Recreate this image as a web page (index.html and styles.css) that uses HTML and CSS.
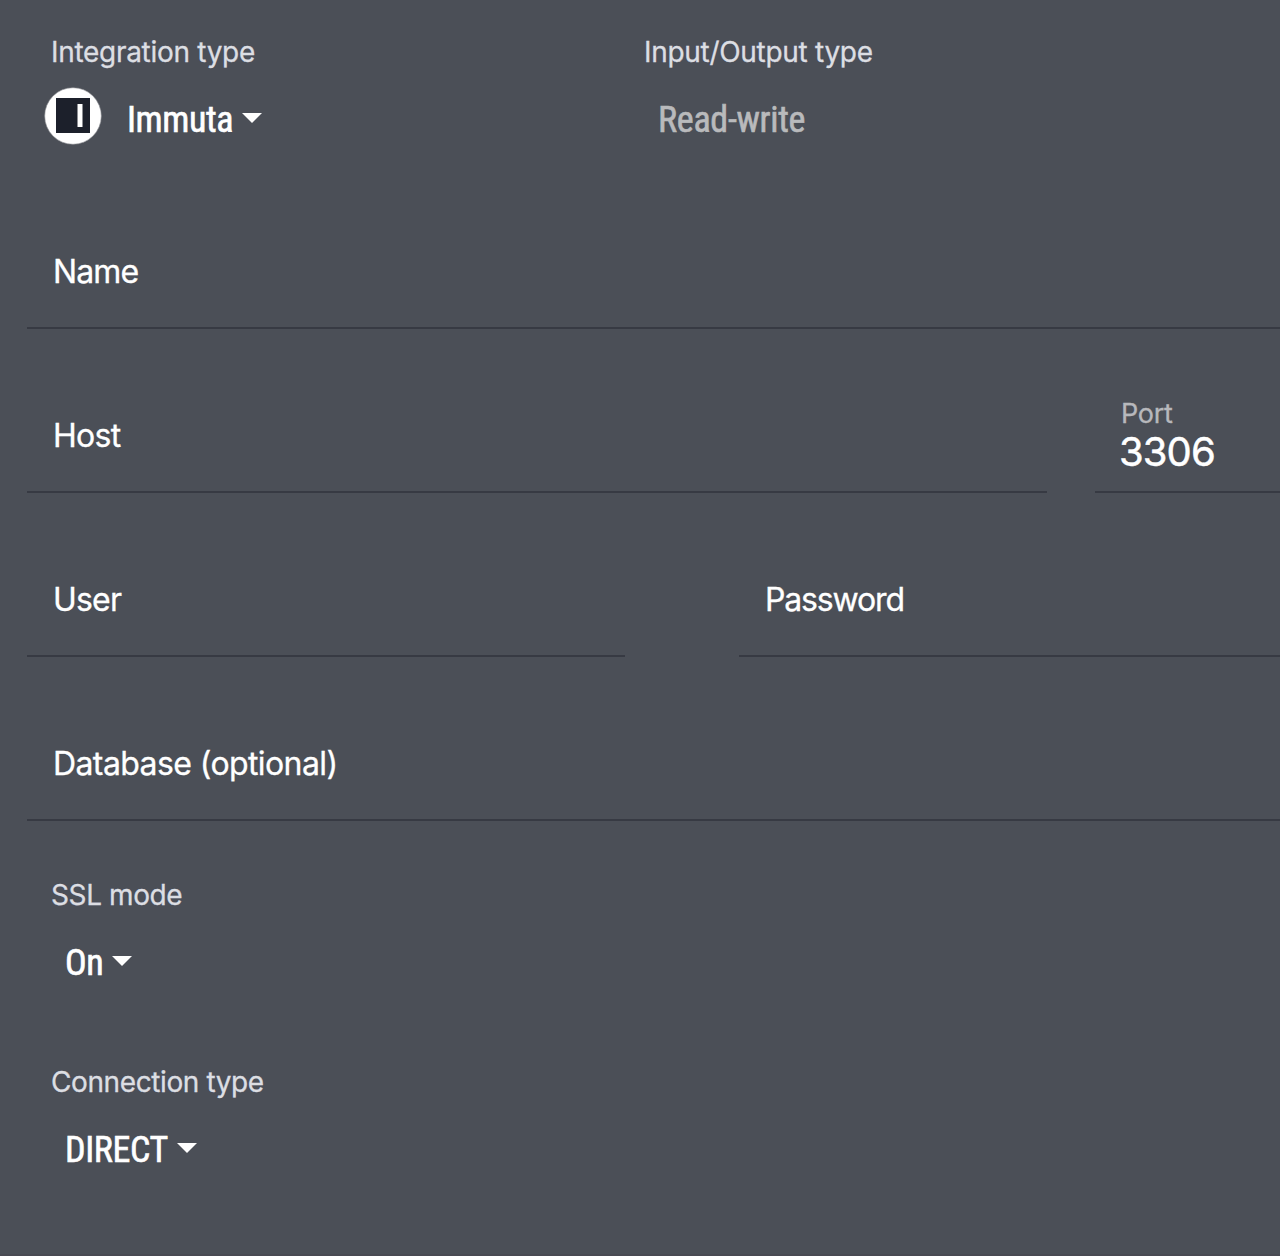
FILE: index.html
```html
<!DOCTYPE html>
<html lang="en">
<head>
<meta charset="utf-8">
<title>Integration</title>
<link rel="stylesheet" href="styles.css">
</head>
<body>
<main class="form">
  <div class="selectors">
    <section class="selector selector-type">
      <div class="label label-integration">Integration type</div>
      <div class="value value-logo">
        <svg class="logo" viewBox="0 0 58 58"><circle cx="29" cy="29" r="28.3" fill="#fff" stroke="#8b8d92" stroke-width=".6"/><path d="M12 11h34v35H12z" fill="#1c202b"/><path d="M33.5 17h5v23h-5z" fill="#fff"/></svg>
        <span class="text text-immuta">Immuta</span>
        <svg class="caret" viewBox="0 0 20 10"><path d="M0 0h20L10 10z" fill="#fff"/></svg>
      </div>
    </section>
    <section class="selector">
      <div class="label label-io">Input/Output type</div>
      <div class="value"><span class="text text-readonly">Read-write</span></div>
    </section>
  </div>
  <div class="row"><div class="field"><span class="name-text">Name</span></div></div>
  <div class="row row-host">
    <div class="field"><span class="host-text">Host</span></div>
    <div class="field field-filled"><span class="port-label">Port</span><span class="port-value">3306</span></div>
  </div>
  <div class="row row-login">
    <div class="field"><span class="user-text">User</span></div>
    <div class="field"><span class="password-text">Password</span></div>
  </div>
  <div class="row"><div class="field"><span class="database-text">Database (optional)</span></div></div>
  <section class="selector selector-ssl">
    <div class="label label-ssl">SSL mode</div>
    <div class="value"><span class="text text-on">On</span><svg class="caret" viewBox="0 0 20 10"><path d="M0 0h20L10 10z" fill="#fff"/></svg></div>
  </section>
  <section class="selector selector-connection">
    <div class="label label-connection">Connection type</div>
    <div class="value"><span class="text text-direct">DIRECT</span><svg class="caret" viewBox="0 0 20 10"><path d="M0 0h20L10 10z" fill="#fff"/></svg></div>
  </section>
</main>
</body>
</html>
```
FILE: styles.css
```css
* { box-sizing: border-box; }
body { margin: 0; background: #4b4f57; font-family: Inter, "Liberation Sans", sans-serif; color: #fff; -webkit-text-stroke: 0.3px; overflow: hidden; }
.form { height: 1256px; padding-top: 32px; border-bottom: 2px solid #494a53; overflow: hidden; }
.selectors { display: flex; height: 133px; }
.selector { padding-left: 51px; }
.selector-type { width: 593px; }
.label { height: 40px; line-height: 41px; font-size: 28px; letter-spacing: -0.3px; color: #dcdee3; white-space: nowrap; }
.label-ssl { letter-spacing: -0.4px; }
.label-connection { letter-spacing: -0.4px; }
.value { display: flex; align-items: center; height: 58px; margin-top: 15px; padding-left: 14px; }
.value-logo { padding-left: 0; margin-left: -7px; }
.logo { width: 58px; height: 58px; margin-right: 25px; }
.text { font-family: "Roboto Condensed", Roboto, sans-serif; font-stretch: 75%; font-size: 36px; line-height: 42px; font-weight: 430; letter-spacing: -0.4px; -webkit-text-stroke: 0.6px; padding-top: 8px; white-space: nowrap; }
.text-immuta { width: 106px; }
.text-on { width: 38px; }
.text-direct { width: 103px; }
.text-readonly { letter-spacing: -0.3px; color: #b9babc; }
.caret { flex: none; width: 20px; height: 10px; margin-left: 9px; margin-top: 4px; }
.row { display: grid; height: 164px; padding-left: 27px; }
.row-host { grid-template-columns: 1020px 1fr; column-gap: 48px; }
.row-login { grid-template-columns: 598px 1fr; column-gap: 114px; }
.field { display: flex; flex-direction: column; padding: 87px 0 0 26px; border-bottom: 2px solid #373a43; font-size: 32px; line-height: 40px; white-space: nowrap; }
.field-filled { padding: 69px 0 0 25px; }
.name-text { letter-spacing: -0.9px; }
.host-text { letter-spacing: -0.7px; }
.user-text { letter-spacing: -0.8px; }
.password-text { letter-spacing: -1.15px; }
.database-text { letter-spacing: -0.6px; }
.port-label { padding-left: 1px; font-size: 27px; line-height: 32px; letter-spacing: -0.3px; color: #b7b8bc; }
.port-value { margin-left: -1px; font-size: 40px; line-height: 43px; letter-spacing: -0.9px; -webkit-text-stroke: 0.5px; }
.selector-ssl { margin-top: 54px; }
.selector-connection { margin-top: 74px; }
```
